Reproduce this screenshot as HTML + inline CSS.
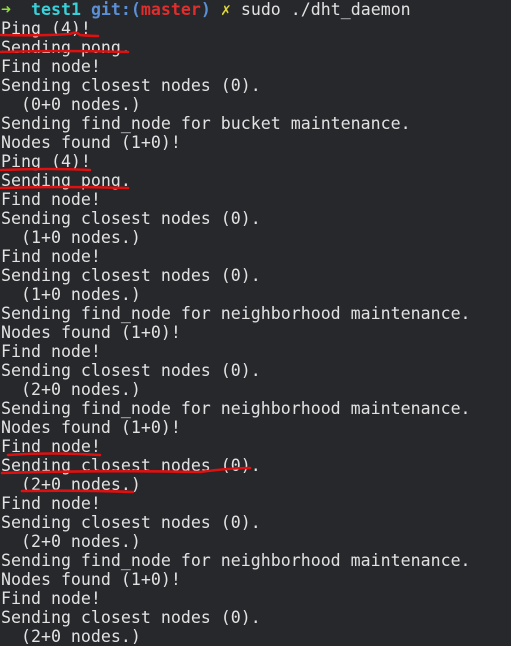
<!DOCTYPE html>
<html><head><style>
html,body{margin:0;padding:0;background:#26282b;width:511px;height:646px;overflow:hidden}
pre{margin:0;padding:0 0 0 1px;font-family:"DejaVu Sans Mono","Liberation Mono",monospace;font-size:16.6px;line-height:19px;color:#e2e2e2;white-space:pre}
.g{color:#8ee03a}.c{color:#3ad0d8;font-weight:bold}.b{color:#5b8fd6;font-weight:bold}.r{color:#e02d2d;font-weight:bold}.y{color:#e0d83a}
svg{position:absolute;left:0;top:0}
</style></head><body>
<pre><span class="g">➜</span>  <span class="c">test1</span> <span class="b">git:(</span><span class="r">master</span><span class="b">)</span> <span class="y">✗</span> sudo ./dht_daemon
Ping (4)!
Sending pong.
Find node!
Sending closest nodes (0).
  (0+0 nodes.)
Sending find_node for bucket maintenance.
Nodes found (1+0)!
Ping (4)!
Sending pong.
Find node!
Sending closest nodes (0).
  (1+0 nodes.)
Find node!
Sending closest nodes (0).
  (1+0 nodes.)
Sending find_node for neighborhood maintenance.
Nodes found (1+0)!
Find node!
Sending closest nodes (0).
  (2+0 nodes.)
Sending find_node for neighborhood maintenance.
Nodes found (1+0)!
Find node!
Sending closest nodes (0).
  (2+0 nodes.)
Find node!
Sending closest nodes (0).
  (2+0 nodes.)
Sending find_node for neighborhood maintenance.
Nodes found (1+0)!
Find node!
Sending closest nodes (0).
  (2+0 nodes.)</pre>
<svg width="511" height="646" fill="none" stroke="#e01010" stroke-width="2.6" stroke-linecap="round">
<path d="M1 35 Q40 36 70 34 Q76 31 80 35 Q90 36 98 36"/>
<path d="M1 52 Q60 50 128 52"/>
<path d="M1 170 Q50 168 90 170"/>
<path d="M1 188 Q60 186 128 188"/>
<path d="M8 455 Q50 452 100 455"/>
<path d="M2 473 Q100 470 200 472 Q230 468 250 468"/>
<path d="M22 491 Q80 490 133 492"/>
</svg>
</body></html>
